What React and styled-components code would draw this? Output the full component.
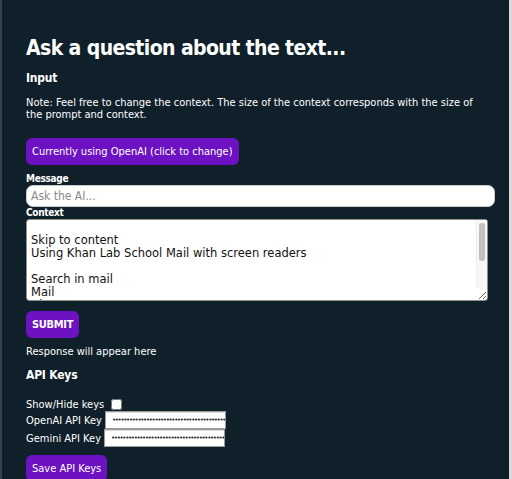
import React, { useState } from "react";
import styled, { createGlobalStyle } from "styled-components";

const GlobalStyle = createGlobalStyle`
  html, body {
    margin: 0;
    padding: 0;
    background: #d9d9d9;
  }
  body {
    font-family: "DejaVu Sans Condensed", "DejaVu Sans", sans-serif;
  }
`;

const Page = styled.div`
  margin: 0 3px 0 0;
  border-left: 2px solid #3b4045;
  background: #10202b;
  color: #ffffff;
  min-height: 479px;
  padding: 0 24px 20px 24px;
  box-sizing: border-box;
  display: flex;
  flex-direction: column;
  overflow: hidden;
`;

const Title = styled.h1`
  font-size: 21px;
  font-weight: bold;
  letter-spacing: -0.6px;
  margin: 35px 0 0;
  line-height: 26px;
`;

const Heading = styled.h3`
  font-size: 12px;
  font-weight: bold;
  letter-spacing: -0.2px;
  margin: ${(p) => p.$top}px 0 0;
  line-height: 16px;
`;

const Note = styled.p`
  font-size: 11px;
  line-height: 12px;
  margin: 11px 0 0;
`;

const Button = styled.button`
  align-self: flex-start;
  background: #6c12c2;
  color: #ffffff;
  border: none;
  border-radius: 6px;
  font-family: inherit;
  font-size: 11px;
  font-weight: ${(p) => (p.$bold ? "bold" : "normal")};
  letter-spacing: ${(p) => (p.$bold ? "-0.3px" : "0")};
  padding: 0 6px;
  height: 27px;
  margin-top: ${(p) => p.$top}px;
  cursor: pointer;
`;

const Label = styled.label`
  display: block;
  font-size: 10px;
  font-weight: bold;
  letter-spacing: -0.3px;
  line-height: 12px;
  margin-top: ${(p) => p.$top || 0}px;
`;

const MessageInput = styled.input`
  display: block;
  width: 469px;
  height: 22px;
  box-sizing: border-box;
  border: 1px solid #c9c9c9;
  border-radius: 7px;
  padding: 0 4px;
  font-family: inherit;
  font-size: 12px;
  &::placeholder {
    color: #8a8a8a;
  }
`;

const ContextWrap = styled.div`
  position: relative;
  width: 462px;
`;

const ContextArea = styled.textarea`
  display: block;
  width: 462px;
  height: 82px;
  box-sizing: border-box;
  border: 1px solid #8f8f8f;
  border-radius: 3px;
  padding: 1px 16px 1px 4px;
  font-family: "DejaVu Sans", sans-serif;
  font-size: 11.5px;
  line-height: 13px;
  color: #111;
  resize: vertical;
`;

/* the headless browser hides native scrollbars, so draw one over the field */
const ScrollTrack = styled.div`
  position: absolute;
  top: 1px;
  right: 1px;
  bottom: 13px;
  width: 11px;
  background: #f7f7f7;
  border-left: 1px solid #ececec;
  box-sizing: border-box;
  pointer-events: none;
`;

const ScrollThumb = styled.div`
  margin: 3px 0 0 2px;
  width: 6px;
  height: 38px;
  border-radius: 3px;
  background: #c1c1c1;
`;

const Response = styled.p`
  font-size: 11px;
  line-height: 12px;
  margin: 8px 0 0;
`;

const KeyRow = styled.div`
  display: flex;
  align-items: center;
  gap: 3px;
  font-size: 11px;
  height: ${(p) => p.$h || 18}px;
  margin-top: ${(p) => p.$top || 0}px;
`;

const KeyInput = styled.input`
  width: 121px;
  height: 18px;
  box-sizing: border-box;
  border: 1px solid #9a9a9a;
  box-shadow: inset 0 1px 1px rgba(0, 0, 0, 0.15);
  padding: 0 0 0 6px;
  font-family: "DejaVu Sans", sans-serif;
  font-size: 7px;
  letter-spacing: -1.3px;
  color: #222;
`;

const Check = styled.input`
  margin: 0 0 0 4px;
  width: 11px;
  height: 11px;
`;

const context = `
Skip to content
Using Khan Lab School Mail with screen readers

Search in mail
Mail
Chat
Meet
`;

export default function App() {
  const [show, setShow] = useState(false);
  return (
    <>
      <GlobalStyle />
      <Page>
        <Title>Ask a question about the text...</Title>
        <Heading $top={9}>Input</Heading>
        <Note>
          Note: Feel free to change the context. The size of the context
          corresponds with the size of the prompt and context.
        </Note>
        <Button $top={17}>Currently using OpenAI (click to change)</Button>
        <Label $top={8}>Message</Label>
        <MessageInput placeholder="Ask the AI..." />
        <Label>Context</Label>
        <ContextWrap>
          <ContextArea defaultValue={context} />
          <ScrollTrack>
            <ScrollThumb />
          </ScrollTrack>
        </ContextWrap>
        <Button $top={10} $bold>
          SUBMIT
        </Button>
        <Response>Response will appear here</Response>
        <Heading $top={9}>API Keys</Heading>
        <KeyRow $top={14} $h={14}>
          Show/Hide keys
          <Check type="checkbox" checked={show} onChange={() => setShow(!show)} />
        </KeyRow>
        <KeyRow>
          OpenAI API Key
          <KeyInput type={show ? "text" : "password"} defaultValue="sk-proj-00000000000000000000000000000000000000" />
        </KeyRow>
        <KeyRow>
          Gemini API Key
          <KeyInput type={show ? "text" : "password"} defaultValue="AIzaSy000000000000000000000000000000000000000" />
        </KeyRow>
        <Button $top={8}>Save API Keys</Button>
      </Page>
    </>
  );
}
